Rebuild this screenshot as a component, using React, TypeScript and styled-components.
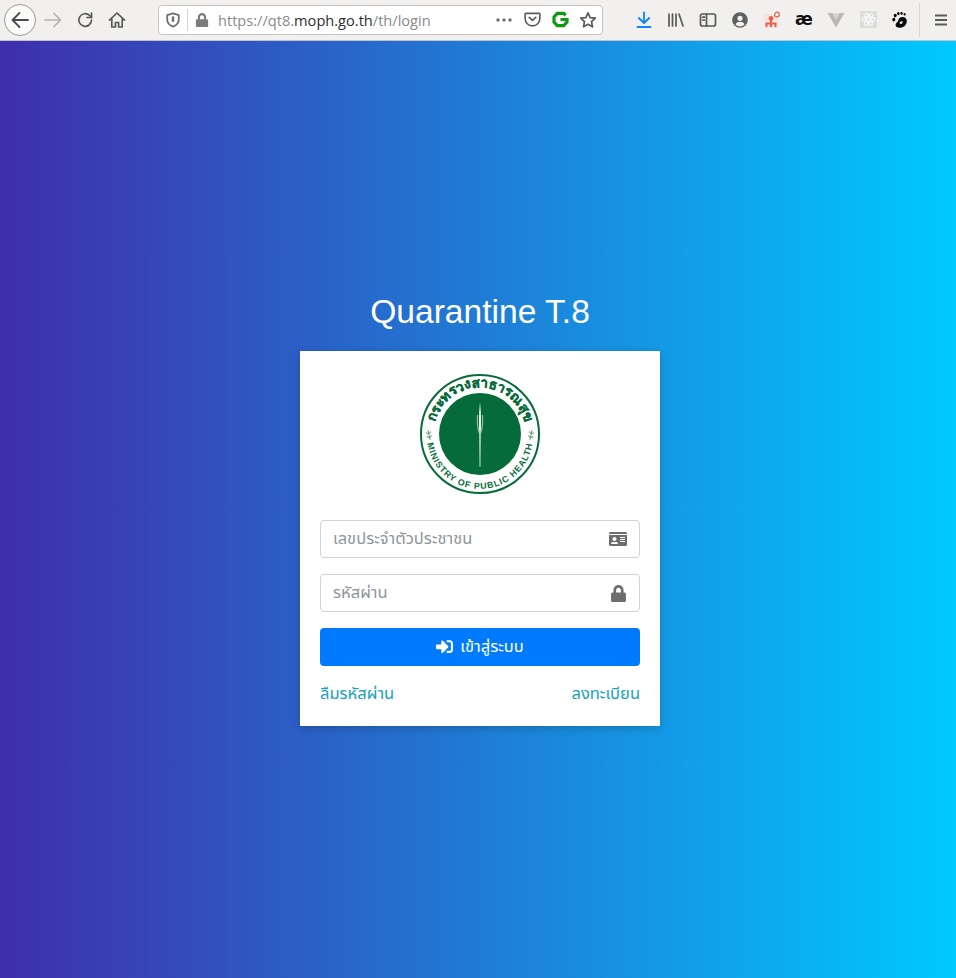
import React from "react";
import styled, { createGlobalStyle } from "styled-components";
import { FaIdCard, FaLock, FaSignInAlt } from "react-icons/fa";

const GlobalStyle = createGlobalStyle`
  html, body {
    margin: 0;
    padding: 0;
    height: 100%;
    overflow: hidden;
  }
  #root {
    height: 100%;
  }
  * {
    box-sizing: border-box;
  }
`;

const Window = styled.div`
  display: flex;
  flex-direction: column;
  height: 978px;
  font-family: "Noto Sans", "Noto Sans Thai", sans-serif;
`;

const Toolbar = styled.div`
  display: flex;
  align-items: center;
  flex: none;
  height: 41px;
  padding: 0 0 1px 4px;
  background: #f1f0ee;
  border-bottom: 1px solid #c4c3c1;
`;

const ToolButton = styled.div<{ $gapBefore?: number; $w?: number }>`
  display: flex;
  align-items: center;
  justify-content: center;
  flex: none;
  width: ${(p) => p.$w ?? 32}px;
  height: 32px;
  margin-left: ${(p) => p.$gapBefore ?? 0}px;
`;

const BackButton = styled(ToolButton)`
  background: #fbfbfa;
  border: 1px solid #9a9996;
  border-radius: 50%;
`;

const UrlBar = styled.div`
  display: flex;
  align-items: center;
  flex: none;
  width: 445px;
  height: 30px;
  margin-left: 25px;
  background: #fff;
  border: 1px solid #c6c5c3;
  border-radius: 4px;
`;

const UrlIcon = styled.div<{ $w: number }>`
  display: flex;
  align-items: center;
  justify-content: center;
  flex: none;
  width: ${(p) => p.$w}px;
  height: 100%;
`;

const UrlDivider = styled.div`
  flex: none;
  width: 1px;
  height: 22px;
  background: #d5d4d2;
`;

const UrlText = styled.div`
  flex: 1;
  margin-left: 2px;
  font-family: "Open Sans", sans-serif;
  font-size: 14.6px;
  color: #8a8a8a;
  white-space: nowrap;
`;

const UrlHost = styled.span`
  color: #2e2e2e;
`;

const ToolDivider = styled.div`
  flex: none;
  width: 1px;
  height: 34px;
  margin-left: 3px;
  background: #d8d7d5;
`;

const AeGlyph = styled.span`
  font-family: "DejaVu Sans", sans-serif;
  font-size: 17px;
  font-weight: 700;
  color: #111;
  line-height: 1;
`;

const Main = styled.main`
  flex: 1;
  display: flex;
  flex-direction: column;
  align-items: center;
  justify-content: center;
  padding: 0 0 1px 4px;
  background: linear-gradient(to right, #3f2eac, #00c9ff);
`;

const Title = styled.h1`
  margin: 0 0 19px;
  font-family: "Liberation Sans", Arial, sans-serif;
  font-size: 33.6px;
  font-weight: 400;
  line-height: 40px;
  color: #fff;
`;

const Card = styled.div`
  display: flex;
  flex-direction: column;
  width: 360px;
  height: 375px;
  padding: 20px;
  background: #fff;
  box-shadow: 0 2px 8px rgba(0, 0, 0, 0.2);
`;

const LogoRow = styled.div`
  display: flex;
  justify-content: center;
  height: 129px;
  padding-top: 2px;
  margin-bottom: 20px;
`;

const Field = styled.div`
  display: flex;
  align-items: center;
  justify-content: space-between;
  height: 38px;
  margin-bottom: 16px;
  padding: 0 12px;
  border: 1px solid #ced4da;
  border-radius: 4px;
  background: #fff;
`;

const Input = styled.input`
  flex: 1;
  min-width: 0;
  height: 100%;
  border: 0;
  outline: 0;
  padding: 0 0 3px;
  font: inherit;
  font-size: 16.5px;
  color: #495057;
  background: transparent;
  &::placeholder {
    color: #8f959b;
    opacity: 1;
  }
`;

const FieldIcon = styled.span`
  display: flex;
  color: #6d6d6d;
`;

const SubmitButton = styled.button`
  display: flex;
  align-items: center;
  justify-content: center;
  gap: 7px;
  height: 38px;
  border: 0;
  border-radius: 4px;
  padding: 0 0 2px;
  font: inherit;
  font-size: 16.5px;
  color: #fff;
  background: #007bff;
`;

const LinkRow = styled.div`
  display: flex;
  justify-content: space-between;
  margin-top: 15px;
`;

const TextLink = styled.a`
  font-size: 16.5px;
  line-height: 24px;
  color: #17a2b8;
  text-decoration: none;
`;

const Glyph = ({ children, size = 18 }: { children: React.ReactNode; size?: number }) => (
  <svg width={size} height={size} viewBox="0 0 18 18" fill="none" stroke="#5a5a5a" strokeWidth="1.7" strokeLinecap="round" strokeLinejoin="round">
    {children}
  </svg>
);

const Sprig = ({ x, flip }: { x: number; flip?: boolean }) => (
  <g transform={`translate(${x} 62) rotate(${flip ? 12 : -12})`} stroke="#5e9b7a" strokeWidth="1" fill="none">
    <path d="M0 -5V5M-2.5 -3 0 -1 2.5 -3M-2.5 1 0 3 2.5 1" />
  </g>
);

const Emblem = () => (
  <svg width="122" height="122" viewBox="0 0 122 122">
    <defs>
      <path id="arc-top" d="M 20 81 A 46 46 0 1 1 102 81" />
      <path id="arc-bottom" d="M 8 63 A 53 53 0 0 0 114 63" />
    </defs>
    <circle cx="61" cy="61" r="59" fill="#fff" stroke="#066b3a" strokeWidth="2" />
    <circle cx="61" cy="61" r="41" fill="#066b3a" />
    <text fontFamily="'Noto Sans', sans-serif" fontSize="13.5" fontWeight="700" fill="#066b3a" stroke="#066b3a" strokeWidth="0.3">
      <textPath href="#arc-top" startOffset="50%" textAnchor="middle">กระทรวงสาธารณสุข</textPath>
    </text>
    <text fontFamily="'Liberation Sans', sans-serif" fontSize="8.8" fontWeight="700" fill="#066b3a" letterSpacing="0.9">
      <textPath href="#arc-bottom" startOffset="50%" textAnchor="middle">MINISTRY OF PUBLIC HEALTH</textPath>
    </text>
    <path d="M61 29 C59.8 40 59.6 50 60.3 62 L60.6 94 L61.4 94 L61.7 62 C62.4 50 62.2 40 61 29 Z" fill="#e3f0e8" />
    <path d="M58.5 42 C58 49 58.5 55 60.2 60 M63.5 42 C64 49 63.5 55 61.8 60" stroke="#8fbda3" strokeWidth="1.2" fill="none" />
    <Sprig x={10} />
    <Sprig x={112} flip />
  </svg>
);

const App = () => {
  return (
    <Window>
      <GlobalStyle />
      <Toolbar>
        <BackButton>
          <svg width="20" height="20" viewBox="0 0 20 20" fill="none" stroke="#4a4a4a" strokeWidth="1.8" strokeLinecap="round" strokeLinejoin="round">
            <path d="M18 10H2.5M9.5 3l-7 7 7 7" />
          </svg>
        </BackButton>
        <ToolButton $gapBefore={1}>
          <svg width="18" height="18" viewBox="0 0 18 18" fill="none" stroke="#b4b3b1" strokeWidth="1.7" strokeLinecap="round" strokeLinejoin="round">
            <path d="M1 9h15.5M10 2.5 16.5 9 10 15.5" />
          </svg>
        </ToolButton>
        <ToolButton>
          <Glyph>
            <path d="M15.5 9a6.3 6.3 0 1 1-1.9-4.5L15.5 6.5" />
            <path d="M15.5 2v4.5H11" />
          </Glyph>
        </ToolButton>
        <ToolButton>
          <Glyph>
            <path d="M1.5 9.2 9 2l7.5 7.2" />
            <path d="M3.8 8v8h3.6v-4.5h3.2V16h3.6V8" />
          </Glyph>
        </ToolButton>
        <UrlBar>
          <UrlIcon $w={28}>
            <svg width="16" height="16" viewBox="0 0 18 18" fill="none" stroke="#6e6e6e" strokeWidth="2" strokeLinejoin="round">
              <path d="M9 1.5 2.5 3.5v5.2c0 3.6 2.8 6.2 6.5 7.8 3.7-1.6 6.5-4.2 6.5-7.8V3.5Z" />
              <path d="M9 5v6" strokeWidth="2.8" />
            </svg>
          </UrlIcon>
          <UrlDivider />
          <UrlIcon $w={28}>
            <FaLock size={14} color="#7b7b7b" />
          </UrlIcon>
          <UrlText>
            https://qt8.<UrlHost>moph.go.th</UrlHost>/th/login
          </UrlText>
          <UrlIcon $w={28}>
            <svg width="16" height="4" viewBox="0 0 16 4" fill="#6f6f6f">
              <circle cx="2" cy="2" r="1.7" />
              <circle cx="8" cy="2" r="1.7" />
              <circle cx="14" cy="2" r="1.7" />
            </svg>
          </UrlIcon>
          <UrlIcon $w={28}>
            <Glyph size={17}>
              <path d="M2 2.5h14a.8.8 0 0 1 .8.8V8a7.8 7.8 0 0 1-15.6 0V3.3a.8.8 0 0 1 .8-.8Z" />
              <path d="M5.5 6.8 9 10l3.5-3.2" />
            </Glyph>
          </UrlIcon>
          <UrlIcon $w={28}>
            <svg width="17" height="17" viewBox="0 0 17 17" fill="none" stroke="#0c9a12" strokeWidth="3.2">
              <path d="M13.6 4.4 11.8 2.4H5.2L2 6v5l3.2 3.6h6.6L15 11V8.5H8.5" />
            </svg>
          </UrlIcon>
          <UrlIcon $w={28}>
            <Glyph>
              <path d="M9 1.8 11.2 6.6l5.1.6-3.8 3.5 1 5.1L9 13.3l-4.5 2.5 1-5.1L1.7 7.2l5.1-.6Z" />
            </Glyph>
          </UrlIcon>
        </UrlBar>
        <ToolButton $gapBefore={25}>
          <svg width="18" height="18" viewBox="0 0 18 18" fill="none" stroke="#0a84ff" strokeWidth="1.8" strokeLinecap="round" strokeLinejoin="round">
            <path d="M9 1.5v10M3.8 7 9 12l5.2-5M2.5 16h13" />
          </svg>
        </ToolButton>
        <ToolButton>
          <Glyph>
            <path d="M2 3v12M5.5 3v12M9 3v12M12 3l4 12" />
          </Glyph>
        </ToolButton>
        <ToolButton>
          <Glyph>
            <rect x="1.5" y="3" width="15" height="12" rx="2" />
            <path d="M7.5 3v12M3.8 6.2h1.6M3.8 9h1.6" />
          </Glyph>
        </ToolButton>
        <ToolButton>
          <svg width="16" height="16" viewBox="0 0 16 16">
            <circle cx="8" cy="8" r="7.8" fill="#5f5f5f" />
            <circle cx="8" cy="6.3" r="2.6" fill="#f1f0ee" />
            <path d="M3.4 12.6C4.4 10.4 6 9.8 8 9.8s3.6.6 4.6 2.8C11.4 13.8 9.8 14.4 8 14.4s-3.4-.6-4.6-1.8Z" fill="#f1f0ee" />
          </svg>
        </ToolButton>
        <ToolButton>
          <svg width="18" height="18" viewBox="0 0 18 18">
            <rect x="1" y="3" width="14" height="14" fill="#f6e4de" />
            <circle cx="8" cy="7.5" r="2.4" fill="#e8604a" />
            <path d="M8 9v3.5M3.5 16v-3.5h9V16M8 12.5V16" stroke="#e8604a" strokeWidth="2" fill="none" />
            <circle cx="14" cy="3.5" r="2.3" fill="#fff" stroke="#e8604a" strokeWidth="1.3" />
          </svg>
        </ToolButton>
        <ToolButton>
          <AeGlyph>æ</AeGlyph>
        </ToolButton>
        <ToolButton>
          <svg width="18" height="16" viewBox="0 0 18 16">
            <path d="M0.5 1h6L9 5.5 11.5 1h6L9 15.5Z" fill="#b9b8b5" />
            <path d="M5 1h3.4L9 2.2 9.6 1H13L9 8Z" fill="#d6d5d3" />
          </svg>
        </ToolButton>
        <ToolButton>
          <svg width="17" height="17" viewBox="0 0 17 17">
            <rect width="17" height="17" fill="#dcdcdb" />
            <g fill="none" stroke="#fafafa" strokeWidth="1.1">
              <ellipse cx="8.5" cy="8.5" rx="6.5" ry="2.6" />
              <ellipse cx="8.5" cy="8.5" rx="6.5" ry="2.6" transform="rotate(60 8.5 8.5)" />
              <ellipse cx="8.5" cy="8.5" rx="6.5" ry="2.6" transform="rotate(120 8.5 8.5)" />
            </g>
            <circle cx="8.5" cy="8.5" r="1.3" fill="#fafafa" />
          </svg>
        </ToolButton>
        <ToolButton>
          <svg width="18" height="18" viewBox="0 0 18 18" fill="#0b0b0b">
            <path d="M9.8 6.2c3-.9 6 .4 6 3.8 0 4-3.3 6.8-7.2 6.8-2.5 0-4-1-4-2.8 0-1.9 2-2.6 2.6-4.2.5-1.4.5-2.9 2.6-3.6Zm1.4 4.2c-1.2-.5-2.5.4-2.5 1.5 0 1 1.2 1.5 2.2 1l-.2-1.2 1.5-.2c.1-.5-.2-.9-1-1.1Z" fillRule="evenodd" />
            <ellipse cx="2.8" cy="8.6" rx="1.5" ry="1.9" />
            <ellipse cx="4.2" cy="4.6" rx="1.5" ry="1.8" />
            <ellipse cx="7.3" cy="2.6" rx="1.3" ry="1.6" />
            <ellipse cx="10.6" cy="2.4" rx="1.2" ry="1.4" />
            <ellipse cx="13.6" cy="3.2" rx="1" ry="1.2" />
          </svg>
        </ToolButton>
        <ToolDivider />
        <ToolButton $gapBefore={6} $w={30}>
          <svg width="14" height="14" viewBox="0 0 14 14" fill="none" stroke="#5a5a5a" strokeWidth="1.8">
            <path d="M1 2.5h12M1 7h12M1 11.5h12" />
          </svg>
        </ToolButton>
      </Toolbar>
      <Main>
        <Title>Quarantine T.8</Title>
        <Card>
          <LogoRow>
            <Emblem />
          </LogoRow>
          <Field>
            <Input placeholder="เลขประจำตัวประชาชน" />
            <FieldIcon>
              <FaIdCard size={18} />
            </FieldIcon>
          </Field>
          <Field>
            <Input placeholder="รหัสผ่าน" />
            <FieldIcon>
              <FaLock size={17} />
            </FieldIcon>
          </Field>
          <SubmitButton>
            <FaSignInAlt size={17} />
            เข้าสู่ระบบ
          </SubmitButton>
          <LinkRow>
            <TextLink href="#">ลืมรหัสผ่าน</TextLink>
            <TextLink href="#">ลงทะเบียน</TextLink>
          </LinkRow>
        </Card>
      </Main>
    </Window>
  );
};

export default App;
